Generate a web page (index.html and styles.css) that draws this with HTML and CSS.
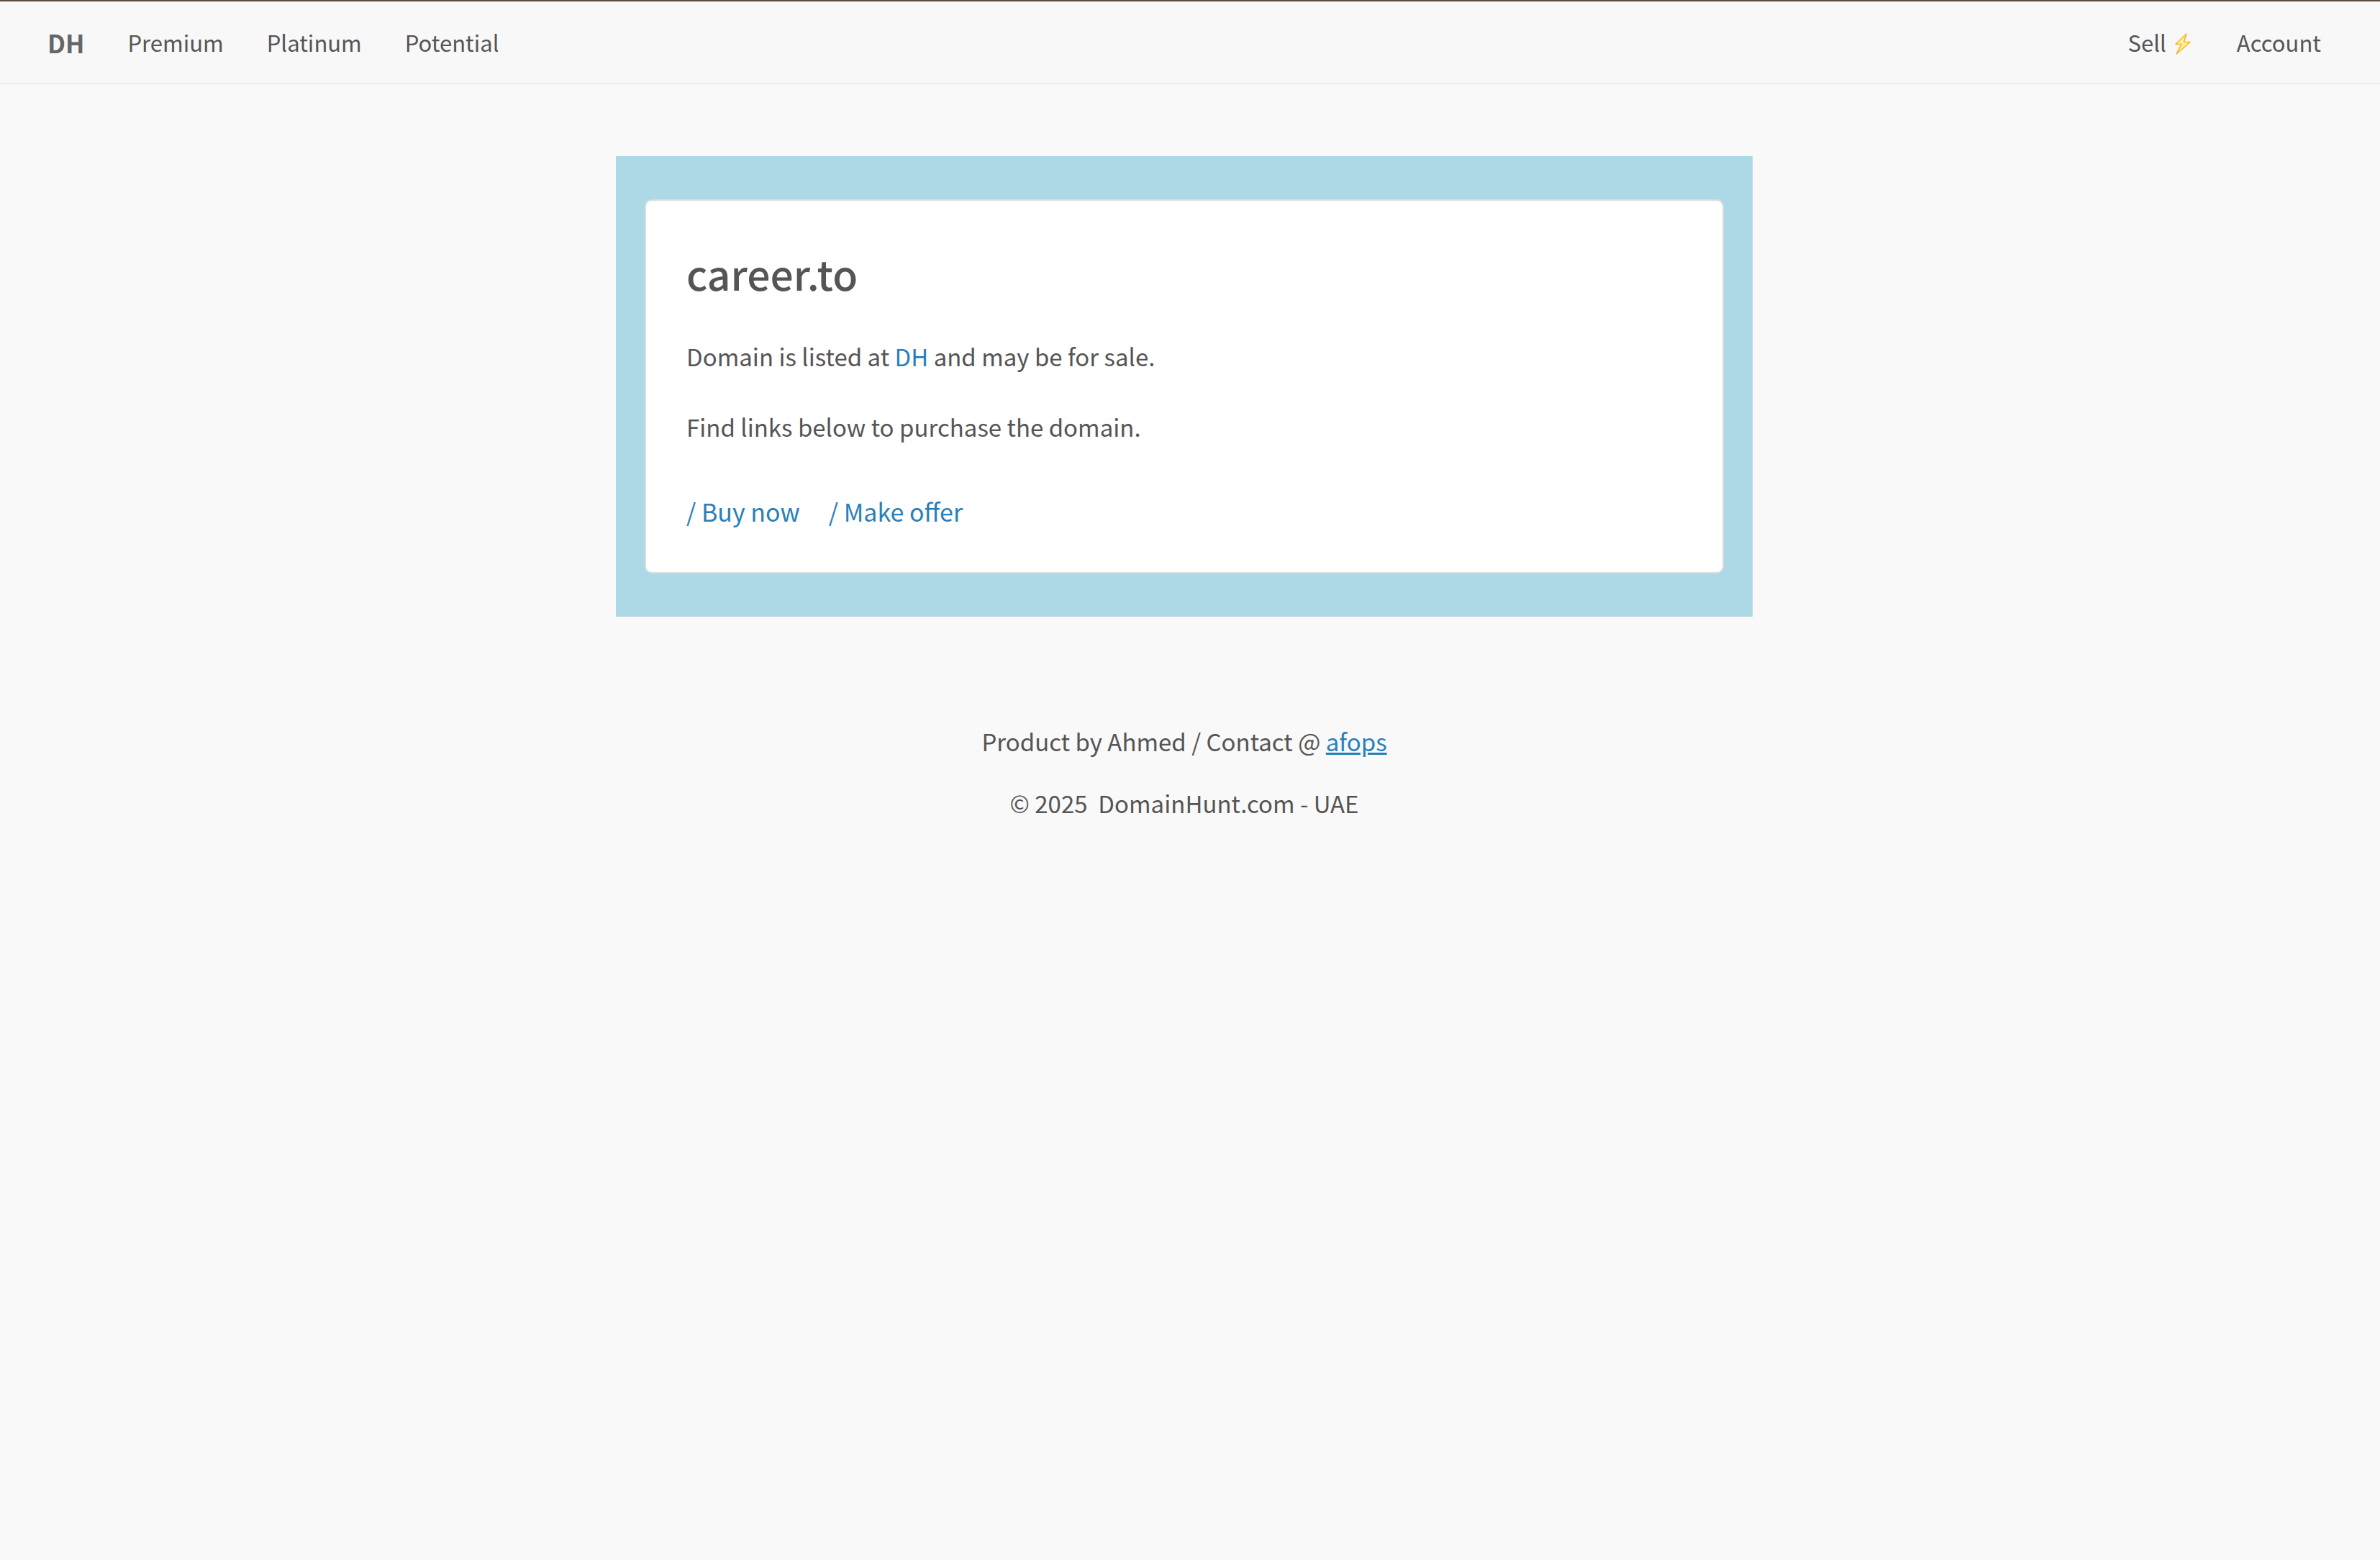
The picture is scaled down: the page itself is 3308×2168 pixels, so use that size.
FILE: index.html
```html
<!DOCTYPE html>
<html lang="en">
<head>
<meta charset="utf-8">
<meta name="viewport" content="width=device-width, initial-scale=1">
<title>career.to</title>
<link rel="stylesheet" href="styles.css">
</head>
<body>
<header class="site-header">
  <nav class="nav" aria-label="Main">
    <a class="brand" href="#">DH</a>
    <a href="#">Premium</a>
    <a href="#">Platinum</a>
    <a href="#">Potential</a>
  </nav>
  <nav class="nav" aria-label="Account">
    <a class="sell" href="#">Sell
      <svg class="bolt" viewBox="0 0 22 30" aria-hidden="true"><path d="M16 1 L1 15.500 L9 15.500 L2 29 L21 12.500 L12.500 12.500 Z" fill="#fff3a0" stroke="#fcb32c" stroke-width="1.600" stroke-linejoin="round"/></svg>
    </a>
    <a href="#">Account</a>
  </nav>
</header>
<main class="page">
  <section class="frame">
    <div class="card">
      <h1>career.to</h1>
      <p>Domain is listed at <a href="#">DH</a> and may be for sale.</p>
      <p>Find links below to purchase the domain.</p>
      <div class="actions">
        <a href="#">/ Buy now</a>
        <a href="#">/ Make offer</a>
      </div>
    </div>
  </section>
</main>
<footer class="site-footer">
  <p>Product by Ahmed / Contact @ <a href="#">afops</a></p>
  <p>© 2025 &nbsp;DomainHunt.com - UAE</p>
</footer>
</body>
</html>
```
FILE: styles.css
```css
* {
  box-sizing: border-box;
}

body {
  margin: 0;
  background: #f9f9f9;
  color: #555;
  font-family: "Noto Sans CJK SC", "Noto Sans", sans-serif;
  font-size: 33px;
  line-height: 48px;
}

a {
  color: #2980b9;
  text-decoration: none;
}

h1,
p {
  margin: 0;
}

.site-header {
  display: flex;
  justify-content: space-between;
  padding: 33px 82px 32px 66px;
  border-top: 2px solid #594b3f;
  border-bottom: 2px solid #eee;
  background: #f8f8f8;
}

.nav {
  display: flex;
  gap: 60px;
  font-size: 31px;
}

.nav a {
  color: #555;
}

.nav .brand {
  color: #666;
  font-size: 35px;
  font-weight: 700;
}

.sell {
  display: flex;
  align-items: center;
  gap: 12px;
}

.bolt {
  width: 22px;
  height: 30px;
  margin: 4px 4px 0 0;
}

.page {
  padding: 100px 16px 0 0;
}

.frame {
  max-width: 1580px;
  margin: 0 auto;
  padding: 60px 40px;
  background: #add8e6;
}

.card {
  padding: 60px 56px;
  border: 2px solid #ddd;
  border-radius: 10px;
  background: #fff;
}

.card h1 {
  margin-bottom: 52px;
  font-size: 57px;
  font-weight: 500;
  line-height: 80px;
}

.card p {
  margin-bottom: 50px;
}

.actions {
  display: flex;
  gap: 40px;
  margin-top: 70px;
  font-size: 34px;
}

.site-footer {
  display: flex;
  flex-direction: column;
  gap: 38px;
  padding: 149px 16px 60px 0;
  text-align: center;
}

.site-footer a {
  text-decoration: underline;
}
```
